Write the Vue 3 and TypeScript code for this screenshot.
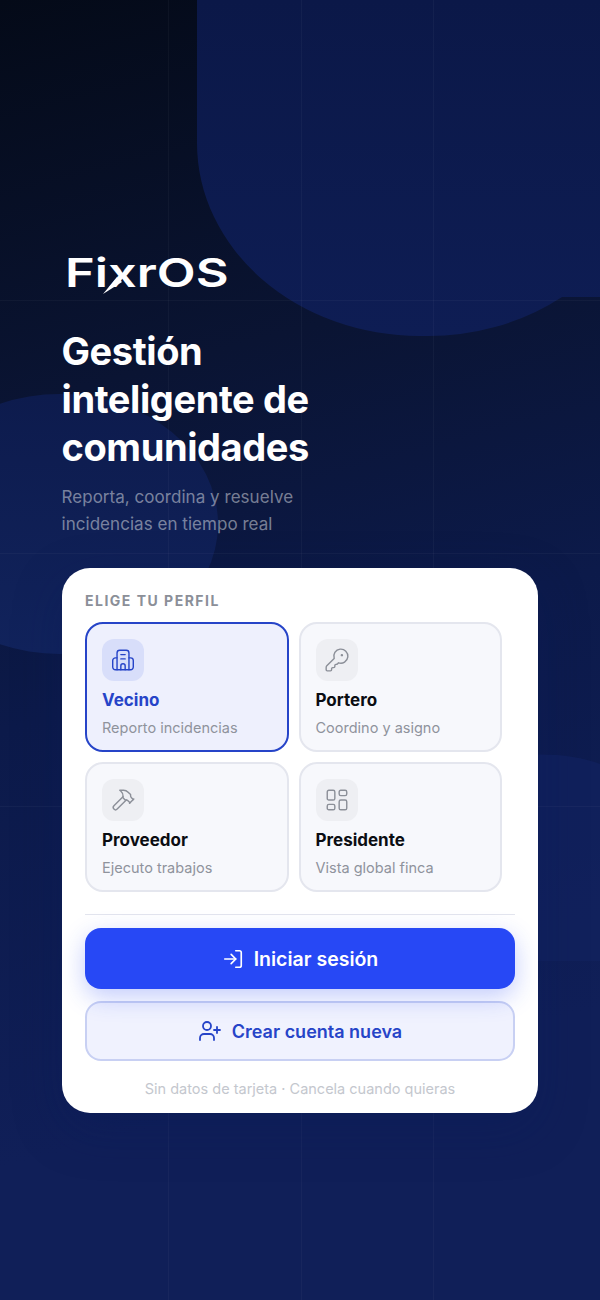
<script setup lang="ts">
interface Role { name: string; desc: string; icon: string; active?: boolean }
const roles: Role[] = [
  { name: 'Vecino', desc: 'Reporto incidencias', icon: 'building', active: true },
  { name: 'Portero', desc: 'Coordino y asigno', icon: 'key' },
  { name: 'Proveedor', desc: 'Ejecuto trabajos', icon: 'hammer' },
  { name: 'Presidente', desc: 'Vista global finca', icon: 'grid' },
]
const vLines = [168, 301, 433]
const hLines = [300, 553, 806]
</script>

<template>
  <main class="screen">
    <div class="backdrop" aria-hidden="true">
      <svg class="shapes" viewBox="0 0 600 1300" width="600" height="1300">
        <defs>
          <linearGradient id="topFill" x1="0" y1="0" x2="0" y2="1">
            <stop offset="0" stop-color="#0b1848" />
            <stop offset="1" stop-color="#0e1d54" />
          </linearGradient>
          <linearGradient id="leftFill" x1="0" y1="0" x2="0" y2="1">
            <stop offset="0" stop-color="#0d1b4d" />
            <stop offset="1" stop-color="#11235c" />
          </linearGradient>
        </defs>
        <path d="M197 0V143A223 193 0 0 0 420 336A223 193 0 0 0 562 297H600V0Z" fill="url(#topFill)" />
        <ellipse cx="60" cy="524" rx="158" ry="130" fill="url(#leftFill)" />
        <path d="M520 755Q570 752 600 764V961H520Z" fill="#11225e" opacity=".8" />
      </svg>
      <i v-for="x in vLines" :key="'v' + x" class="line v" :style="{ left: x + 'px' }"></i>
      <i v-for="y in hLines" :key="'h' + y" class="line h" :style="{ top: y + 'px' }"></i>
    </div>

    <section class="hero">
      <div class="logo">
        <span class="logo-text">FixrOS</span>
        <svg class="swoosh" viewBox="0 0 24 24" aria-hidden="true"><path d="M0 24 L14 7 L19 12 Z" fill="#fff" /></svg>
      </div>
      <h1>Gestión<br />inteligente de<br />comunidades</h1>
      <p class="sub">Reporta, coordina y resuelve<br />incidencias en tiempo real</p>
    </section>

    <section class="card">
      <h2>ELIGE TU PERFIL</h2>
      <div class="roles">
        <div v-for="r in roles" :key="r.name" class="role" :class="{ active: r.active }">
          <div class="role-icon">
            <svg viewBox="0 0 24 24" width="26" height="26" fill="none" stroke="currentColor" stroke-width="1.300" stroke-linecap="round" stroke-linejoin="round">
              <template v-if="r.icon === 'building'">
                <path d="M6.500 21V5.500A2.500 2.500 0 0 1 9 3h6a2.500 2.500 0 0 1 2.500 2.500V21" />
                <path d="M6.500 10H5a2.500 2.500 0 0 0-2.500 2.500V18.500A2.500 2.500 0 0 0 5 21h14a2.500 2.500 0 0 0 2.500-2.500V12.500A2.500 2.500 0 0 0 19 10h-1.500" />
                <path d="M10 21v-3.500a2 2 0 0 1 4 0V21" />
                <path d="M10 7h4M10 11h4" />
              </template>
              <template v-else-if="r.icon === 'key'">
                <path d="M2.586 17.414A2 2 0 0 0 2 18.828V21a1 1 0 0 0 1 1h3a1 1 0 0 0 1-1v-1a1 1 0 0 1 1-1h1a1 1 0 0 0 1-1v-1a1 1 0 0 1 1-1h.172a2 2 0 0 0 1.414-.586l.814-.814a6.500 6.500 0 1 0-4-4z" />
                <circle cx="16.500" cy="7.500" r=".5" fill="currentColor" />
              </template>
              <template v-else-if="r.icon === 'hammer'">
                <path d="m15 12-8.373 8.373a1 1 0 1 1-3-3L12 9" />
                <path d="m18 15 4-4" />
                <path d="m21.500 11.500-1.914-1.914A2 2 0 0 1 19 8.172V7l-2.260-2.260a6 6 0 0 0-4.202-1.756L9 2.960l.920.820A6.180 6.180 0 0 1 12 8.400V10l2 2h1.172a2 2 0 0 1 1.414.586L18.500 14.500" />
              </template>
              <template v-else>
                <rect x="3" y="3" width="7" height="9" rx="1.500" />
                <rect x="14" y="3" width="7" height="5" rx="1.500" />
                <rect x="14" y="12" width="7" height="9" rx="1.500" />
                <rect x="3" y="16" width="7" height="5" rx="1.500" />
              </template>
            </svg>
          </div>
          <div class="role-name">{{ r.name }}</div>
          <div class="role-desc">{{ r.desc }}</div>
        </div>
      </div>
      <hr />
      <button class="btn primary" type="button">
        <svg viewBox="0 0 24 24" width="22" height="22" fill="none" stroke="currentColor" stroke-width="1.800" stroke-linecap="round" stroke-linejoin="round">
          <path d="M15 3h4a2 2 0 0 1 2 2v14a2 2 0 0 1-2 2h-4" /><path d="M10 17l5-5-5-5" /><path d="M15 12H3" />
        </svg>
        Iniciar sesión
      </button>
      <button class="btn secondary" type="button">
        <svg viewBox="0 0 24 24" width="24" height="24" fill="none" stroke="currentColor" stroke-width="1.800" stroke-linecap="round" stroke-linejoin="round">
          <path d="M16 21v-2a4 4 0 0 0-4-4H6a4 4 0 0 0-4 4v2" /><circle cx="9" cy="7" r="4" /><path d="M19 8v6M22 11h-6" />
        </svg>
        Crear cuenta nueva
      </button>
      <p class="foot">Sin datos de tarjeta · Cancela cuando quieras</p>
    </section>
  </main>
</template>

<style>
html, body { margin: 0; padding: 0; background: #0f1e52; }
</style>

<style scoped>
.screen {
  position: relative;
  width: 600px;
  height: 1300px;
  overflow: hidden;
  box-sizing: border-box;
  padding: 255px 0 0 61.500px;
  font-family: Inter, "Liberation Sans", sans-serif;
  background: linear-gradient(165deg, #040a18 0%, #0a1433 28%, #0c1a4a 50%, #101f58 80%, #101f58 100%);
}
.backdrop { position: absolute; inset: 0; pointer-events: none; }
.shapes { position: absolute; left: 0; top: 0; display: block; }
.line { position: absolute; background: rgba(255, 255, 255, .035); }
.line.v { top: 0; bottom: 0; width: 1px; }
.line.h { left: 0; right: 0; height: 1px; }

.hero { position: relative; height: 313px; }
.logo { position: relative; height: 38px; margin-bottom: 34px; }
.logo-text {
  display: block;
  font-weight: 600;
  font-size: 40px;
  line-height: 36px;
  color: #fff;
  transform: scaleX(1.265);
  transform-origin: left center;
  margin-left: 3px;
}
.swoosh { position: absolute; left: 41px; top: 15px; width: 24px; height: 24px; }
h1 {
  margin: 0 0 13px;
  font-size: 38px;
  line-height: 48px;
  font-weight: 700;
  letter-spacing: -.4px;
  color: #fff;
}
.sub {
  margin: 0;
  font-size: 17px;
  line-height: 27px;
  letter-spacing: .04px;
  color: rgba(255, 255, 255, .45);
}

.card {
  position: relative;
  width: 476.500px;
  height: 545px;
  box-sizing: border-box;
  padding: 24px 23px 0 23.500px;
  background: #fff;
  border-radius: 28px;
  box-shadow: 0 16px 48px rgba(10, 25, 90, .35);
}
h2 {
  margin: 0 0 12px;
  font-size: 14px;
  line-height: 18px;
  font-weight: 700;
  letter-spacing: 1.500px;
  color: #8b8f98;
}
.roles { display: grid; grid-template-columns: 203.500px 203.500px; gap: 10px; }
.role {
  box-sizing: border-box;
  height: 130px;
  padding: 15px;
  border: 2px solid #e4e6ee;
  border-radius: 18px;
  background: #f7f8fc;
}
.role.active { border-color: #2644c8; background: #eef0fd; }
.role-icon {
  width: 42px;
  height: 42px;
  border-radius: 12px;
  background: #eeeff3;
  color: #8b8f98;
  display: flex;
  align-items: center;
  justify-content: center;
}
.active .role-icon { background: #d8defa; color: #2644c8; }
.role-name { margin-top: 7px; font-size: 17px; line-height: 24px; font-weight: 700; color: #0b0d12; }
.active .role-name { color: #2644c8; }
.role-desc { margin-top: 6px; font-size: 14.500px; line-height: 20px; color: #8f939c; }
hr { margin: 22px 0 13px; border: 0; height: 1px; background: #e3e5ee; }
.btn {
  display: flex;
  align-items: center;
  justify-content: center;
  gap: 10px;
  width: 100%;
  box-sizing: border-box;
  font-family: inherit;
  font-weight: 600;
  font-size: 19.500px;
  border-radius: 16px;
}
.primary {
  height: 61px;
  border: 0;
  background: #2748f5;
  color: #fff;
  box-shadow: 0 8px 24px rgba(39, 72, 245, .28);
}
.secondary {
  height: 60px;
  margin-top: 12px;
  border: 2px solid rgba(38, 68, 200, .2);
  background: rgba(39, 72, 245, .07);
  color: #2644c8;
  font-size: 18px;
}
.foot {
  margin: 18px 0 0;
  text-align: center;
  font-size: 14.500px;
  line-height: 20px;
  color: #c4c7ce;
}
</style>
